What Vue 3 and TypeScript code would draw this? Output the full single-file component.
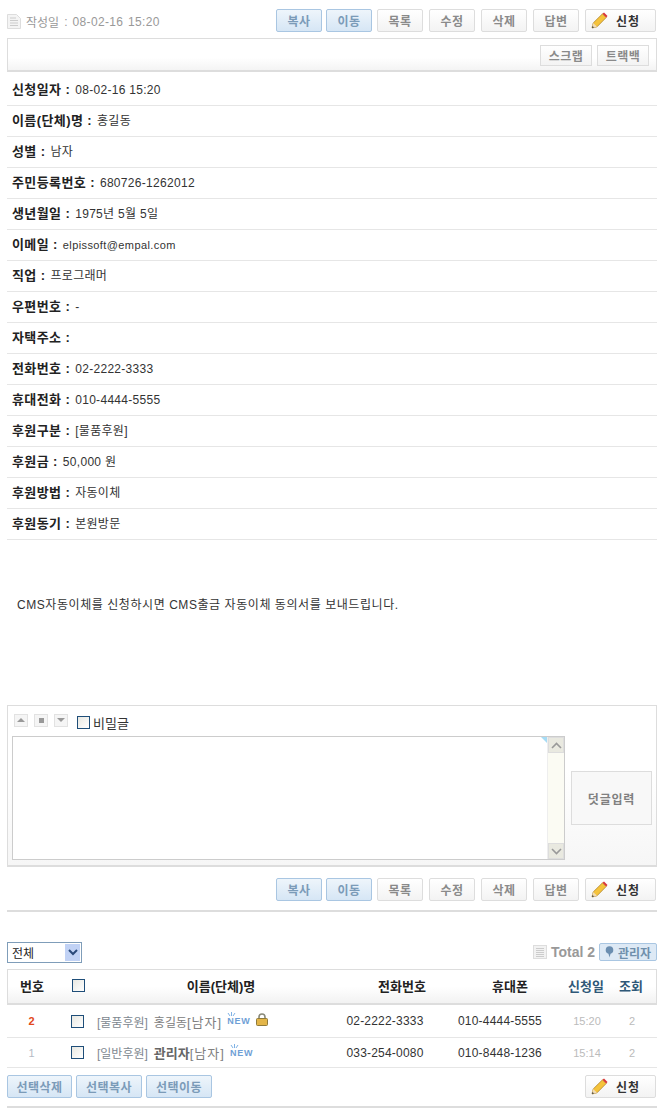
<script setup lang="ts">
const mainButtons = [
  { label: '복사', blue: true },
  { label: '이동', blue: true },
  { label: '목록', blue: false },
  { label: '수정', blue: false },
  { label: '삭제', blue: false },
  { label: '답변', blue: false },
]

const fields = [
  { label: '신청일자', value: '08-02-16 15:20' },
  { label: '이름(단체)명', value: '홍길동' },
  { label: '성별', value: '남자' },
  { label: '주민등록번호', value: '680726-1262012' },
  { label: '생년월일', value: '1975년 5월 5일' },
  { label: '이메일', value: 'elpissoft@empal.com', small: true },
  { label: '직업', value: '프로그래머' },
  { label: '우편번호', value: '-' },
  { label: '자택주소', value: '' },
  { label: '전화번호', value: '02-2222-3333' },
  { label: '휴대전화', value: '010-4444-5555' },
  { label: '후원구분', value: '[물품후원]' },
  { label: '후원금', value: '50,000 원' },
  { label: '후원방법', value: '자동이체' },
  { label: '후원동기', value: '본원방문' },
]

const rows = [
  { no: '2', hot: true, kind: '[물품후원]', name: '홍길동', admin: false, phone: '02-2222-3333', mobile: '010-4444-5555', time: '15:20', lock: true },
  { no: '1', hot: false, kind: '[일반후원]', name: '관리자', admin: true, phone: '033-254-0080', mobile: '010-8448-1236', time: '15:14', lock: false },
]
</script>

<template>
  <div class="page">
    <div class="top">
      <div class="written">
        <svg class="doc" width="14" height="15" viewBox="0 0 14 15">
          <path d="M.5.5h9l4 4v10H.5z" fill="#f4f4f4" stroke="#ddd" />
          <path d="M3 4h6M3 6.500h8M3 9h8M3 11.500h8" stroke="#ccc" />
        </svg>
        <span class="written-label">작성일</span>
        <span class="written-value">: 08-02-16 15:20</span>
      </div>
      <div class="btns">
        <button v-for="b in mainButtons" :key="b.label" class="btn" :class="{ blue: b.blue }">{{ b.label }}</button>
        <button class="btn apply">
          <svg width="17" height="17" viewBox="0 0 17 17">
            <path d="M1 16l1.200-5L11.500 1.800l3.700 3.700L6 14.800z" fill="#f5c33b" stroke="#a87a1c" stroke-width=".7" />
            <path d="M11.500 1.800l1.500-1.300 3.500 3.500-1.300 1.500z" fill="#d9363a" />
            <path d="M1 16l1.200-5 3.800 3.800z" fill="#f1dcb5" />
            <path d="M1 16l.5-2 1.500 1.500z" fill="#333" />
          </svg>
          <span>신청</span>
        </button>
      </div>
    </div>

    <div class="subbar">
      <button class="btn small">스크랩</button>
      <button class="btn small">트랙백</button>
    </div>

    <ul class="fields">
      <li v-for="f in fields" :key="f.label">
        <b>{{ f.label }} :</b>
        <span :class="{ email: f.small }">{{ f.value }}</span>
      </li>
    </ul>

    <p class="message">CMS자동이체를 신청하시면 CMS출금 자동이체 동의서를 보내드립니다.</p>

    <div class="comment">
      <div class="comment-tools">
        <span class="mini"><i class="up" /></span>
        <span class="mini"><i class="square" /></span>
        <span class="mini"><i class="down" /></span>
        <span class="check secret" />
        <span class="secret-label">비밀글</span>
      </div>
      <div class="comment-body">
        <div class="textarea">
          <i class="corner" />
          <div class="scroll">
            <span class="arrow">
              <svg width="11" height="7" viewBox="0 0 11 7"><path d="M1 6l4.500-4.500L10 6" fill="none" stroke="#999" stroke-width="1.600" /></svg>
            </span>
            <span class="arrow">
              <svg width="11" height="7" viewBox="0 0 11 7"><path d="M1 1l4.500 4.500L10 1" fill="none" stroke="#999" stroke-width="1.600" /></svg>
            </span>
          </div>
        </div>
        <button class="submit">덧글입력</button>
      </div>
    </div>

    <div class="btns lower">
      <button v-for="b in mainButtons" :key="b.label" class="btn" :class="{ blue: b.blue }">{{ b.label }}</button>
      <button class="btn apply">
        <svg width="17" height="17" viewBox="0 0 17 17">
          <path d="M1 16l1.200-5L11.500 1.800l3.700 3.700L6 14.800z" fill="#f5c33b" stroke="#a87a1c" stroke-width=".7" />
          <path d="M11.500 1.800l1.500-1.300 3.500 3.500-1.300 1.500z" fill="#d9363a" />
          <path d="M1 16l1.200-5 3.800 3.800z" fill="#f1dcb5" />
          <path d="M1 16l.5-2 1.500 1.500z" fill="#333" />
        </svg>
        <span>신청</span>
      </button>
    </div>
    <div class="rule" />

    <div class="list-top">
      <div class="select">
        <span>전체</span>
        <i class="select-arrow">
          <svg width="10" height="7" viewBox="0 0 10 7"><path d="M1 1l4 4 4-4" fill="none" stroke="#2b4a7a" stroke-width="2" /></svg>
        </i>
      </div>
      <div class="total">
        <svg width="14" height="14" viewBox="0 0 14 14">
          <rect x=".5" y=".5" width="13" height="13" fill="#f2f2f2" stroke="#ddd" />
          <path d="M3 3.500h8M3 5.500h8M3 7.500h8M3 9.500h8M3 11.500h8" stroke="#ccc" />
        </svg>
        <b>Total 2</b>
        <span class="admin">
          <svg width="9" height="12" viewBox="0 0 9 12">
            <circle cx="4.500" cy="4" r="3.800" fill="#6b8eb0" />
            <path d="M3.300 7h2.400L4.500 11.500z" fill="#6b8eb0" />
          </svg>
          관리자
        </span>
      </div>
    </div>

    <div class="thead">
      <span class="c-no">번호</span>
      <span class="c-check"><i class="check" /></span>
      <span class="c-name">이름(단체)명</span>
      <span class="c-phone">전화번호</span>
      <span class="c-mobile">휴대폰</span>
      <span class="c-date link">신청일</span>
      <span class="c-view link">조회</span>
    </div>

    <div v-for="r in rows" :key="r.no" class="trow">
      <span class="c-no" :class="r.hot ? 'hot' : 'cold'">{{ r.no }}</span>
      <span class="c-check"><i class="check" /></span>
      <span class="c-name cell-name">
        <span class="kind">{{ r.kind }}</span>
        <span class="who" :class="{ admin_name: r.admin }">{{ r.name }}</span><span class="who gender">[남자]</span>
        <span class="new">
          <svg class="spark" width="9" height="5" viewBox="0 0 9 5">
            <path d="M1 1l2 3M4.500 0v4M8 1L6 4" stroke="#7fb2e5" />
          </svg>
          NEW
        </span>
        <svg v-if="r.lock" class="lock" width="12" height="13" viewBox="0 0 12 13">
          <path d="M3 6V4a3 3 0 0 1 6 0v2" fill="none" stroke="#8a8a7a" stroke-width="1.600" />
          <rect x=".5" y="5.500" width="11" height="7" rx="1" fill="#e3b548" stroke="#8f7a3a" />
        </svg>
      </span>
      <span class="c-phone num">{{ r.phone }}</span>
      <span class="c-mobile num">{{ r.mobile }}</span>
      <span class="c-date time">{{ r.time }}</span>
      <span class="c-view time">2</span>
    </div>

    <div class="list-actions">
      <div class="select-btns">
        <button class="btn blue wide">선택삭제</button>
        <button class="btn blue wide">선택복사</button>
        <button class="btn blue wide">선택이동</button>
      </div>
      <button class="btn apply">
        <svg width="17" height="17" viewBox="0 0 17 17">
          <path d="M1 16l1.200-5L11.500 1.800l3.700 3.700L6 14.800z" fill="#f5c33b" stroke="#a87a1c" stroke-width=".7" />
          <path d="M11.500 1.800l1.500-1.300 3.500 3.500-1.300 1.500z" fill="#d9363a" />
          <path d="M1 16l1.200-5 3.800 3.800z" fill="#f1dcb5" />
          <path d="M1 16l.5-2 1.500 1.500z" fill="#333" />
        </svg>
        <span>신청</span>
      </button>
    </div>
    <div class="rule end" />
  </div>
</template>

<style scoped>
.page {
  box-sizing: border-box;
  width: 670px;
  height: 1116px;
  padding: 9px 13px 0 7px;
  background: #fff;
  font-family: 'Liberation Sans', 'Noto Sans CJK KR', sans-serif;
  font-size: 12px;
  color: #333;
  overflow: hidden;
}

.top {
  display: flex;
  justify-content: space-between;
  align-items: flex-start;
  height: 29px;
}

.written {
  display: flex;
  align-items: center;
  height: 25px;
  color: #999;
}

.doc {
  margin-right: 5px;
}

.written-label {
  margin-right: 5px;
}

.written-value {
  letter-spacing: 0.35px;
  word-spacing: 1px;
}

.btns {
  display: flex;
  gap: 6px;
  padding-right: 1px;
}

.btn {
  box-sizing: border-box;
  width: 46px;
  height: 23px;
  padding: 0;
  border: 1px solid #ddd;
  border-radius: 2px;
  background: linear-gradient(#fff, #f3f3f3);
  font-family: inherit;
  font-size: 12px;
  font-weight: bold;
  letter-spacing: 0.5px;
  color: #8a8a8a;
}

.btn.blue {
  border-color: #a9c6e2;
  background: linear-gradient(#eef5fb, #d6e6f5);
  color: #7b9bb8;
}

.btns .btn:nth-child(2) {
  margin-left: -2px;
}

.btns .btn:nth-child(3) {
  margin-left: -1px;
}

.btn.apply {
  display: flex;
  align-items: center;
  gap: 6px;
  width: 71px;
  padding-left: 5px;
  letter-spacing: 1px;
  color: #333;
}

.btn.apply span {
  margin-left: 2px;
}

.btn.small {
  width: 52px;
  height: 21px;
  border-radius: 0;
}

.btn.wide {
  width: 66px;
}

.btn.wide:first-child {
  width: 65px;
}

.subbar {
  box-sizing: border-box;
  display: flex;
  justify-content: flex-end;
  gap: 5px;
  width: 650px;
  height: 34px;
  padding: 6px 7px 0 0;
  border: 1px solid #ddd;
  border-bottom-width: 2px;
  background: linear-gradient(#fff 60%, #f4f4f4);
}

.fields {
  margin: 0;
  padding: 0;
  list-style: none;
}

.fields li {
  box-sizing: border-box;
  display: flex;
  align-items: baseline;
  gap: 5px;
  height: 31px;
  padding: 4px 0 0 5px;
  border-bottom: 1px solid #e6e6e6;
  letter-spacing: 0.3px;
}

.fields li:first-child {
  height: 34px;
  padding-top: 7px;
}

.fields b {
  font-size: 13px;
  letter-spacing: 0.4px;
  color: #222;
}

.fields .email {
  font-size: 11px;
  letter-spacing: 0.4px;
}

.message {
  margin: 57px 0 0 10px;
  height: 108px;
  line-height: 16px;
  letter-spacing: 0.56px;
}

.comment {
  box-sizing: border-box;
  width: 650px;
  height: 162px;
  padding: 3px 4px 0;
  border: 1px solid #ddd;
  border-bottom-width: 2px;
  background: linear-gradient(#fff 40%, #f6f6f6);
}

.comment-tools {
  display: flex;
  align-items: center;
  gap: 6px;
  height: 22px;
  padding-left: 2px;
}

.mini {
  box-sizing: border-box;
  display: flex;
  align-items: center;
  justify-content: center;
  width: 14px;
  height: 13px;
  border: 1px solid #e2e2e2;
  background: #f5f5f5;
}

.mini i {
  display: block;
}

.mini .up {
  border: 4px solid transparent;
  border-top: 0;
  border-bottom: 4px solid #999;
}

.mini .down {
  border: 4px solid transparent;
  border-bottom: 0;
  border-top: 4px solid #999;
}

.mini .square {
  width: 5px;
  height: 5px;
  background: #999;
}

.check {
  box-sizing: border-box;
  display: block;
  width: 13px;
  height: 13px;
  border: 1px solid #1f4e79;
  background: linear-gradient(135deg, #e8e8e2, #fff);
}

.secret {
  margin: 4px 0 0 3px;
}

.secret-label {
  margin: 4px 0 0 -3px;
  font-size: 13px;
  color: #333;
}

.comment-body {
  display: flex;
  align-items: center;
  gap: 6px;
  margin-top: 5px;
}

.textarea {
  box-sizing: border-box;
  position: relative;
  display: flex;
  justify-content: flex-end;
  width: 553px;
  height: 124px;
  border: 1px solid #ccc;
  background: #fff;
}

.corner {
  position: absolute;
  top: 0;
  right: 17px;
  border-top: 6px solid #a6dcf5;
  border-left: 6px solid transparent;
}

.scroll {
  display: flex;
  flex-direction: column;
  justify-content: space-between;
  width: 16px;
  background: #fbfbf3;
  border-left: 1px solid #eee;
}

.arrow {
  display: flex;
  align-items: center;
  justify-content: center;
  height: 16px;
  background: #e9e9e0;
  border: 1px solid #ddd;
  box-sizing: border-box;
}

.submit {
  box-sizing: border-box;
  width: 81px;
  height: 54px;
  padding: 0;
  border: 1px solid #ddd;
  background: #f8f8f8;
  font-family: inherit;
  font-size: 12px;
  font-weight: bold;
  letter-spacing: 0.8px;
  color: #808080;
}

.lower {
  justify-content: flex-end;
  margin-top: 11px;
}

.rule {
  height: 2px;
  margin-top: 9px;
  background: #ddd;
}

.list-top {
  display: flex;
  justify-content: space-between;
  align-items: center;
  height: 22px;
  margin-top: 29px;
}

.select {
  box-sizing: border-box;
  display: flex;
  justify-content: space-between;
  align-items: center;
  width: 75px;
  height: 21px;
  padding: 0 1px 0 4px;
  border: 1px solid #7f9db9;
  color: #222;
}

.select-arrow {
  display: flex;
  align-items: center;
  justify-content: center;
  width: 15px;
  height: 17px;
  background: #c1d2f5;
}

.total {
  display: flex;
  align-items: center;
  gap: 4px;
  color: #999;
}

.total b {
  font-size: 14px;
}

.admin {
  box-sizing: border-box;
  display: flex;
  align-items: center;
  gap: 4px;
  width: 58px;
  height: 18px;
  padding-left: 5px;
  border: 1px solid #a9c6e2;
  border-radius: 2px;
  background: #dde9f5;
  font-size: 12px;
  font-weight: bold;
  white-space: nowrap;
  color: #6f8fac;
}

.thead,
.trow {
  display: flex;
  align-items: center;
  width: 650px;
}

.thead {
  box-sizing: border-box;
  height: 36px;
  margin-top: 6px;
  padding-bottom: 2px;
  border: 1px solid #ddd;
  border-bottom-width: 2px;
  background: linear-gradient(#fff 50%, #f2f2f2);
  font-size: 13px;
  font-weight: bold;
  color: #222;
}

.trow {
  box-sizing: border-box;
  height: 30px;
  border-bottom: 1px solid #e6e6e6;
}

.thead + .trow {
  height: 33px;
}

.c-no,
.c-phone,
.c-mobile,
.c-date,
.c-view {
  flex: none;
  text-align: center;
}

.c-no {
  width: 49px;
}

.c-check {
  flex: none;
  display: flex;
  justify-content: center;
  width: 28px;
  margin-left: 7px;
}

.c-name {
  box-sizing: border-box;
  flex: none;
  width: 249px;
  white-space: nowrap;
}

.c-phone {
  width: 90px;
}

.c-mobile {
  width: 140px;
}

.c-date {
  width: 34px;
}

.c-view {
  width: 48px;
  margin-left: 4px;
}

.thead .c-no {
  width: 48px;
}

.thead .c-check {
  margin-left: 8px;
}

.thead .c-name {
  width: 258px;
  text-align: center;
}

.thead .c-phone {
  width: 104px;
}

.thead .c-mobile {
  width: 112px;
}

.thead .c-date {
  width: 40px;
}

.thead .c-view {
  width: 50px;
  margin-left: 0;
}

.link {
  color: #2f5878;
}

.hot {
  font-size: 11px;
  font-weight: bold;
  color: #e2481a;
}

.cold {
  font-size: 11px;
  color: #b4bac4;
}

.cell-name {
  display: flex;
  align-items: center;
  padding-left: 6px;
}

.kind {
  margin-right: 6px;
  font-size: 12px;
  color: #808890;
}

.who {
  color: #808080;
}

.gender {
  font-size: 13px;
  letter-spacing: 1px;
}

.admin_name {
  font-size: 13px;
  font-weight: bold;
  color: #666;
}

.new {
  position: relative;
  margin-left: 5px;
  font-size: 9px;
  font-weight: bold;
  letter-spacing: 0.8px;
  color: #6f9fd6;
}

.spark {
  position: absolute;
  top: -4px;
  left: 0;
}

.lock {
  margin-left: 5px;
  margin-top: -3px;
}

.num {
  letter-spacing: 0.2px;
  color: #333;
}

.time {
  font-size: 11px;
  color: #bbb;
}

.list-actions {
  display: flex;
  justify-content: space-between;
  align-items: center;
  margin-top: 7px;
}

.select-btns {
  display: flex;
  gap: 4px;
}

.list-actions .btn.apply {
  margin-right: 1px;
}

.rule.end {
  margin-top: 8px;
}
</style>
